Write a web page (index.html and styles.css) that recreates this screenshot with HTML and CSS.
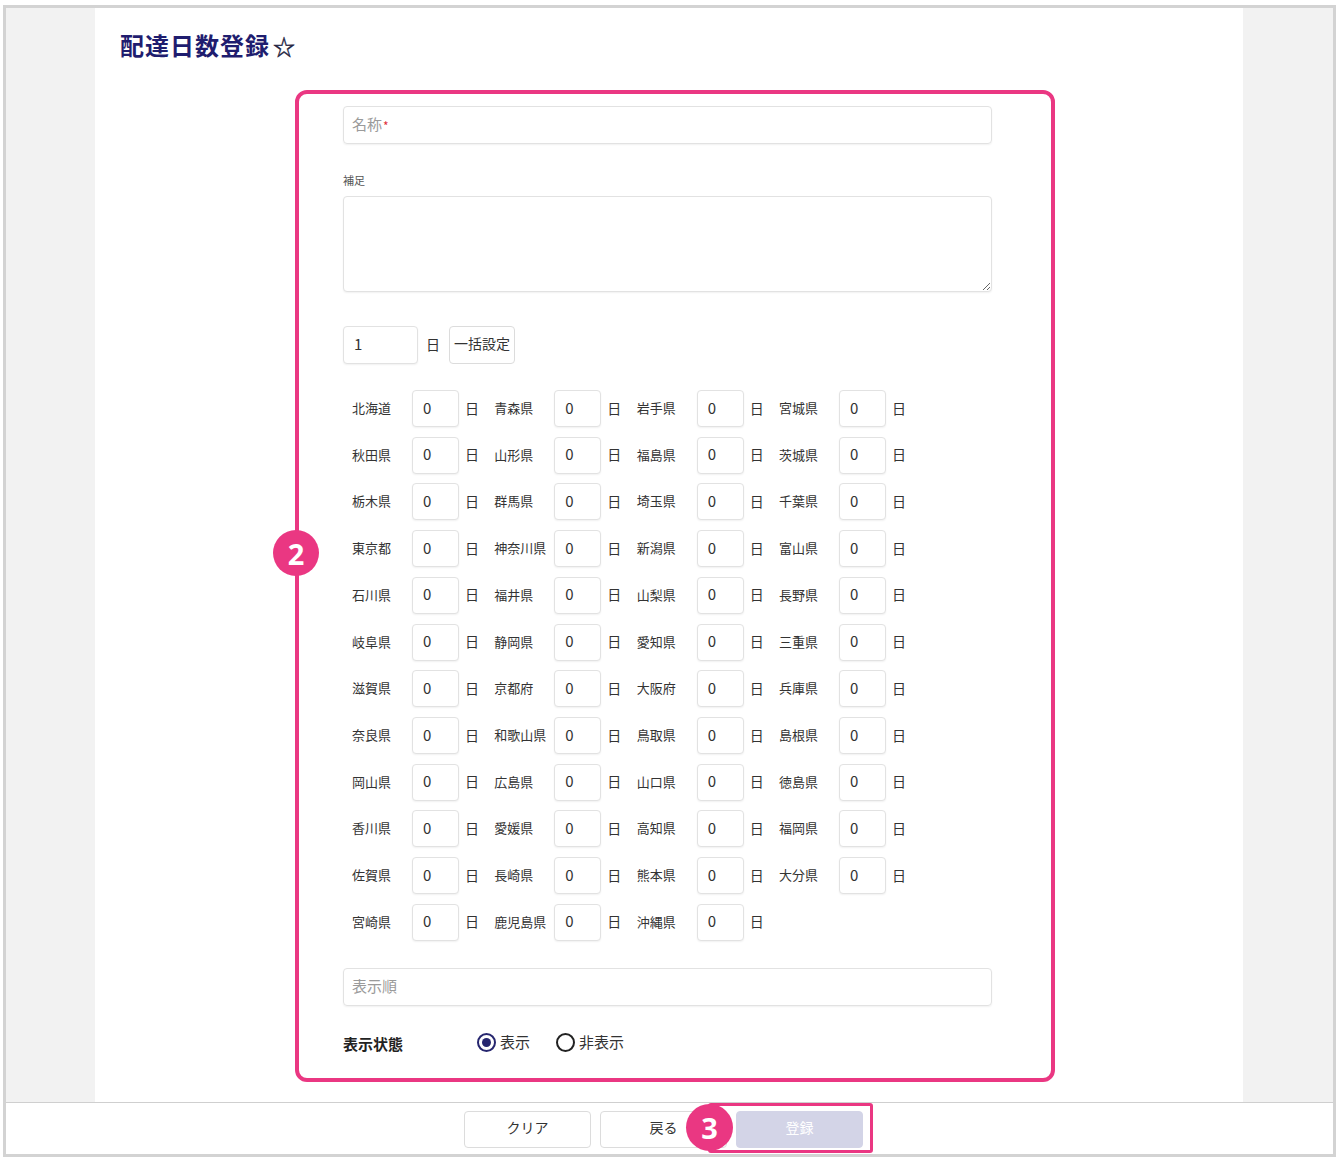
FILE: index.html
```html
<!DOCTYPE html>
<html lang="ja">
<head>
<meta charset="utf-8">
<title>配達日数登録</title>
<link rel="stylesheet" href="styles.css">
</head>
<body>
<div class="frame">
  <div class="area">
    <div class="side side-left"></div>
    <main class="main">
      <h1 class="title">配達日数登録<span class="star">☆</span></h1>
      <div class="annot">
        <span class="badge badge-2">2</span>
        <div class="field field-name"><span class="ph">名称</span><span class="req">*</span></div>
        <div class="label-small">補足</div>
        <textarea class="memo"></textarea>
        <div class="bulk">
          <input class="inp inp-bulk" type="text" value="1">
          <span class="day">日</span>
          <button class="btn-bulk" type="button">一括設定</button>
        </div>
        <div class="pref-grid" id="grid"></div>
        <div class="field field-order"><span class="ph">表示順</span></div>
        <div class="status">
          <span class="status-label">表示状態</span>
          <label class="opt"><span class="radio on"></span><span class="opt-text">表示</span></label>
          <label class="opt"><span class="radio"></span><span class="opt-text">非表示</span></label>
        </div>
      </div>
    </main>
    <div class="side side-right"></div>
  </div>
  <footer class="footer">
    <button class="fbtn" type="button">クリア</button>
    <button class="fbtn" type="button">戻る</button>
    <span class="reg-wrap">
      <span class="annot3"></span>
      <span class="badge badge-3">3</span>
      <button class="fbtn fbtn-reg" type="button">登録</button>
    </span>
  </footer>
</div>
<script src="app.js"></script>
</body>
</html>
```

FILE: app.js
```js
(function () {
  var prefs = ["北海道","青森県","岩手県","宮城県","秋田県","山形県","福島県","茨城県","栃木県","群馬県","埼玉県","千葉県","東京都","神奈川県","新潟県","富山県","石川県","福井県","山梨県","長野県","岐阜県","静岡県","愛知県","三重県","滋賀県","京都府","大阪府","兵庫県","奈良県","和歌山県","鳥取県","島根県","岡山県","広島県","山口県","徳島県","香川県","愛媛県","高知県","福岡県","佐賀県","長崎県","熊本県","大分県","宮崎県","鹿児島県","沖縄県"];
  var grid = document.getElementById("grid");
  prefs.forEach(function (p) {
    var l = document.createElement("span");
    l.className = "pref";
    l.textContent = p;
    var i = document.createElement("input");
    i.className = "inp inp-day";
    i.type = "text";
    i.value = "0";
    var d = document.createElement("span");
    d.className = "day";
    d.textContent = "日";
    grid.appendChild(l);
    grid.appendChild(i);
    grid.appendChild(d);
  });
})();
```

FILE: styles.css
```css
* { box-sizing: border-box; }
html, body { margin: 0; padding: 0; background: #fff; }
body {
  font-family: "Noto Sans CJK JP", "Noto Sans", sans-serif;
  color: #333;
  width: 1338px;
  height: 1168px;
  overflow: hidden;
}
.frame {
  margin: 5px 0 0 3px;
  width: 1333px;
  height: 1152px;
  border: 3px solid #d3d3d3;
  display: flex;
  flex-direction: column;
}
.area { flex: 1; display: flex; min-height: 0; }
.side { background: #f2f2f2; }
.side-left { width: 89px; }
.side-right { width: 90px; }
.main { flex: 1; background: #fff; }
.title {
  margin: 0;
  padding: 22px 0 0 25px;
  font-size: 24px;
  line-height: 30px;
  font-weight: 700;
  letter-spacing: 1px;
  color: #1f1d6f;
}
.star {
  font-size: 22px;
  font-weight: 400;
  color: #23233f;
  letter-spacing: 0;
  margin-left: 3px;
  -webkit-text-stroke: 0.4px #23233f;
}
.annot {
  position: relative;
  margin: 30px 0 0 200px;
  width: 760px;
  border: 4px solid #ea3782;
  border-radius: 12px;
  padding: 12px 59px 23px 44px;
}
.badge {
  position: absolute;
  border-radius: 50%;
  background: #ea3782;
  color: #fff;
  font-family: "Noto Sans", "Open Sans", sans-serif;
  font-weight: 700;
  font-size: 29px;
  display: flex;
  align-items: center;
  justify-content: center;
  z-index: 3;
}
.badge-2 { left: -26px; top: 436px; width: 46px; height: 46px; }
.field {
  height: 38px;
  border: 1px solid #e2e2e2;
  border-radius: 4px;
  box-shadow: 0 1px 2px rgba(0,0,0,0.06);
  padding: 0 8px 3px;
  display: flex;
  align-items: center;
  font-size: 15px;
}
.ph { color: #9a9a9a; }
.req { color: #e0303a; font-size: 12px; margin-left: 1px; position: relative; top: 2px; }
.label-small {
  margin-top: 28px;
  font-size: 11px;
  line-height: 16px;
  color: #555;
}
.memo {
  display: block;
  margin-top: 8px;
  width: 100%;
  height: 96px;
  border: 1px solid #e2e2e2;
  border-radius: 4px;
  box-shadow: 0 1px 2px rgba(0,0,0,0.06);
  font-family: inherit;
}
.bulk {
  margin-top: 34px;
  display: flex;
  align-items: center;
  height: 38px;
}
.inp {
  border: 1px solid #e2e2e2;
  border-radius: 4px;
  box-shadow: 0 1px 2px rgba(0,0,0,0.06);
  font-family: "Noto Sans CJK JP", "Noto Sans", sans-serif;
  font-size: 15px;
  color: #333;
  padding: 0 0 3px 10px;
  background: #fff;
  outline: none;
}
.inp-bulk { width: 75px; height: 38px; }
.bulk .day { margin: 0 9px 0 8px; position: relative; top: -1px; }
.btn-bulk {
  height: 38px;
  width: 66px;
  padding: 0 0 4px;
  border: 1px solid #dcdcdc;
  border-radius: 4px;
  background: #fff;
  font-family: inherit;
  font-size: 14px;
  color: #333;
}
.day { font-size: 14px; color: #333; }
.pref-grid {
  margin: 26px 0 0 9px;
  display: grid;
  grid-template-columns: repeat(4, 60px 47px 35.33px);
  grid-auto-rows: 37px;
  row-gap: 9.73px;
  align-items: center;
}
.pref { font-size: 13px; color: #333; white-space: nowrap; position: relative; top: -1px; }
.inp-day { width: 47px; height: 37px; }
.pref-grid .day { padding-left: 6px; position: relative; top: -1px; }
.field-order { margin-top: 27px; }
.status {
  margin-top: 25px;
  height: 24px;
  display: flex;
  align-items: center;
}
.status-label {
  width: 134px;
  font-size: 15px;
  font-weight: 700;
  color: #222;
  position: relative;
  top: 1px;
}
.opt {
  display: flex;
  align-items: center;
  font-size: 15px;
  color: #333;
  margin-right: 26px;
}
.opt-text { position: relative; top: -1px; }
.radio {
  width: 19px;
  height: 19px;
  border-radius: 50%;
  border: 2px solid #222;
  margin-right: 4px;
  display: inline-flex;
  align-items: center;
  justify-content: center;
}
.radio.on { border-color: #26266f; }
.radio.on::after {
  content: "";
  width: 9px;
  height: 9px;
  border-radius: 50%;
  background: #26266f;
}
.footer {
  height: 52px;
  border-top: 1px solid #cfcfcf;
  display: flex;
  justify-content: center;
  align-items: flex-start;
  gap: 9px;
  padding: 8px 12px 0 0;
}
.fbtn {
  width: 127px;
  height: 37px;
  border: 1px solid #dcdcdc;
  border-radius: 4px;
  background: #fff;
  font-family: inherit;
  font-size: 14px;
  color: #333;
  padding: 0 0 5px;
}
.reg-wrap { position: relative; display: block; }
.fbtn-reg {
  position: relative;
  z-index: 1;
  background: #d3d4e7;
  border-color: #d3d4e7;
  color: #fff;
  display: block;
}
.annot3 {
  position: absolute;
  left: -28px;
  top: -8px;
  width: 165px;
  height: 50px;
  border: 3px solid #ea3782;
  border-radius: 3px;
  z-index: 2;
}
.badge-3 { left: -50px; top: -7px; width: 47px; height: 47px; }
```
